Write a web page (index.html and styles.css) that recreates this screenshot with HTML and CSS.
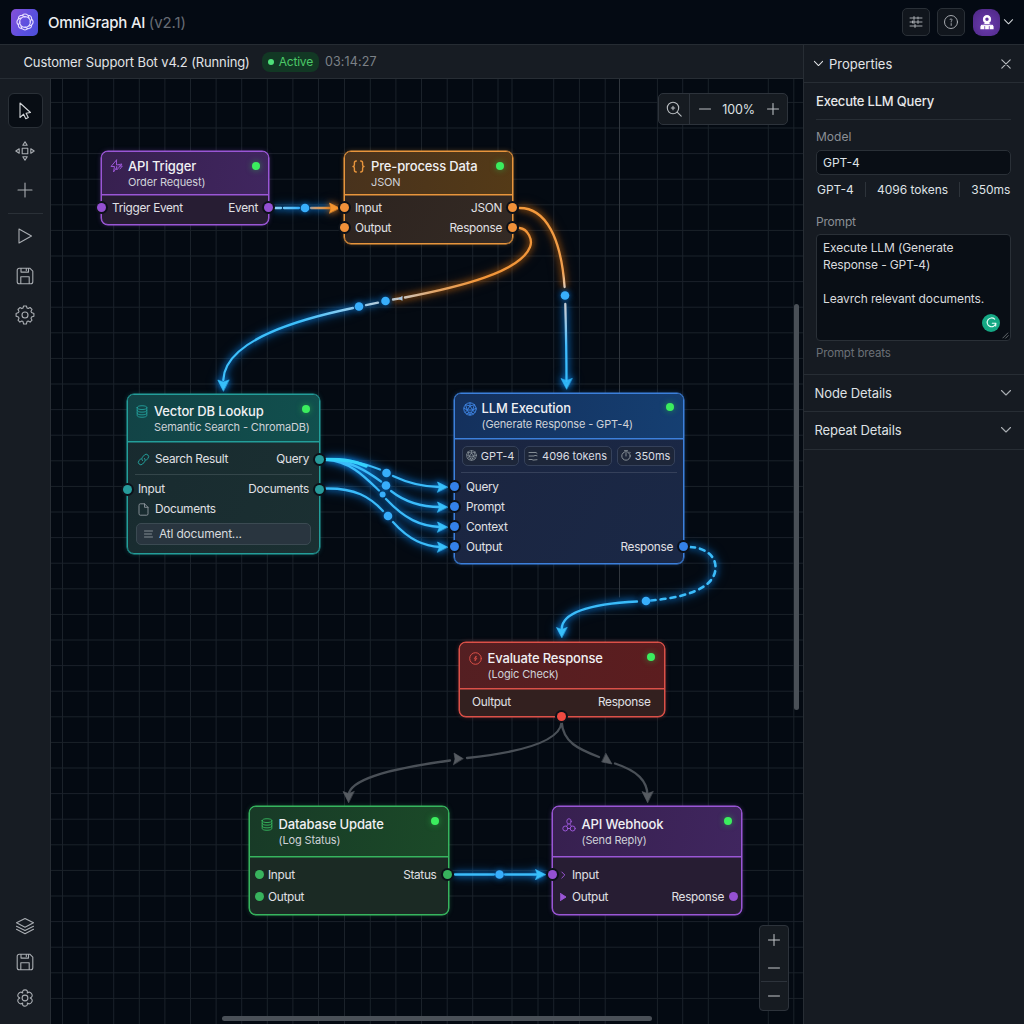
FILE: index.html
```html
<!DOCTYPE html>
<html lang="en">
<head>
<meta charset="utf-8">
<title>OmniGraph AI</title>
<link rel="stylesheet" href="styles.css">
</head>
<body>
<svg class="defs" width="0" height="0" aria-hidden="true">
  <symbol id="save" viewBox="0 0 18 18"><path d="M1.2 3.2a2 2 0 0 1 2-2h10.6l3 3v10.600a2 2 0 0 1-2 2H3.200a2 2 0 0 1-2-2zM5 1.500v3.600h7.500V1.500M4.800 16.600V9.800h8.400v6.800M10.300 2v1.500"/></symbol>
  <symbol id="gear" viewBox="0 0 20 20"><path d="M8.600 1h2.800l.6 2 1.200.5 1.900-1 1.900 1.900-1 1.900.5 1.200 2.400.9v2.800l-2.400.9-.5 1.200 1 1.900-1.900 1.900-1.900-1-1.200.5-.6 2.400H8.600l-.6-2.400-1.200-.5-1.900 1L3 15.200l1-1.900-.5-1.200-2.400-.9V8.500l2.400-.9.500-1.200-1-1.900 1.900-1.900 1.900 1L8 3z"/><circle cx="10" cy="10" r="3"/></symbol>
  <symbol id="database" viewBox="0 0 12 14"><path d="M.8 2.800C.8 1.600 2.600.8 6 .8s5.200.8 5.200 2S9.400 4.900 6 4.900.8 4 .8 2.800zv8.400c0 1.200 1.800 2 5.200 2s5.200-.8 5.200-2V2.800M.8 5.700c0 1.200 1.800 2 5.200 2s5.200-.8 5.200-2M.8 8.600c0 1.200 1.800 2 5.200 2s5.200-.8 5.200-2"/></symbol>
  <symbol id="globe" viewBox="0 0 14 14"><circle cx="7" cy="7" r="6.200"/><path d="M2.500 2.700 7 4l4.500-1.300M.9 6.200 4.300 8 7 4l2.700 4 3.400-1.800M4.300 8 7 13.200 9.700 8H4.300L2 10.700M9.700 8l2.300 2.700M7 .8V4M2.500 2.700 4.300 8M11.500 2.700 9.700 8M3.500 12 7 10l3.500 2"/></symbol>
  <symbol id="down" viewBox="0 0 12 8"><path d="m1.500 1.500 4.500 4.500 4.500-4.500"/></symbol>
</svg>

<header class="topbar">
  <div class="logo"><svg width="18" height="18" viewBox="0 0 18 18"><circle cx="9" cy="9" r="5.400"/><path class="petals" d="M6 2.300Q9-.3 12 2.300M12 2.300Q15.800 2.600 15.600 6M15.600 6Q18.600 9 15.600 12M15.600 12Q15.800 15.400 12 15.700M12 15.700Q9 18.300 6 15.700M6 15.700Q2.200 15.400 2.400 12M2.400 12Q-.6 9 2.400 6M2.400 6Q2.200 2.600 6 2.300M6 2.300 9 4M12 2.300 13 5M15.600 6 14 9M15.600 12 13 13M12 15.700 9 14M6 15.700 5 13M2.400 12 4 9M2.400 6 5 5"/></svg></div>
  <h1 class="brand">OmniGraph AI <span>(v2.1)</span></h1>
  <div class="actions">
    <button class="square"><svg width="14" height="14" viewBox="0 0 14 14"><path d="M1 3h12M1 7h12M1 11h12M5 1.500v3M9 5.500v3M5 5.500v3M6 9.500v3M9 2v2M3.500 6v2"/></svg></button>
    <button class="square"><svg width="16" height="16" viewBox="0 0 16 16"><circle cx="8" cy="8" r="6.500"/><path d="M7 5.600C7.300 4.500 9.100 4.600 8.900 5.900 8.800 6.700 8.200 7 8.200 8M8.200 9.600v1.800"/></svg></button>
    <button class="avatar"><svg width="14" height="15" viewBox="0 0 14 15"><circle class="head" cx="7" cy="4.200" r="2.900"/><path class="body" d="M.4 14.200V11.500Q.6 9.400 3 9.200l2.500-1.500h3L11 9.200q2.400.2 2.600 2.300v2.700z"/><path class="slit" d="M4.700 11.500v3M9.300 11.500v3M2.500 9.600h9"/></svg></button>
    <svg class="chev" width="11" height="8"><use href="#down"/></svg>
  </div>
</header>

<div class="shell">
  <div class="statusbar">
    <span class="flow-name">Customer Support Bot v4.2 (Running)</span>
    <span class="pill"><i></i>Active</span>
    <span class="clock">03:14:27</span>
  </div>

  <nav class="tools">
    <button class="tool selected"><svg width="16" height="20" viewBox="0 0 16 20"><path d="M3 2v14.500l3.600-3.300 2.200 4.600 2.500-1.200-2.200-4.400 4.400-.7z"/></svg></button>
    <button class="tool move"><svg width="20" height="20" viewBox="0 0 20 20"><path d="M7.200 7.200h5.600v5.600H7.200zM10 .8l2.200 3.400H7.800zM10 19.200l2.200-3.400H7.800zM.8 10l3.400-2.200v4.400zM19.200 10l-3.400-2.200v4.400z"/></svg></button>
    <button class="tool add"><svg width="16" height="16" viewBox="0 0 16 16"><path d="M8 1v14M1 8h14"/></svg></button>
    <hr>
    <button class="tool play"><svg width="16" height="18" viewBox="0 0 16 18"><path d="M2 2v14l12.500-7z"/></svg></button>
    <button class="tool"><svg width="18" height="18"><use href="#save"/></svg></button>
    <button class="tool"><svg width="20" height="20"><use href="#gear"/></svg></button>
    <div class="tools-foot">
      <button class="tool"><svg width="20" height="18" viewBox="0 0 20 18"><path d="m10 1.500 8.500 4.300L10 10.200 1.500 5.800zM1.500 9.200l8.500 4.400 8.500-4.400M1.500 12.300l8.500 4.400 8.500-4.400"/></svg></button>
      <button class="tool"><svg width="18" height="18"><use href="#save"/></svg></button>
      <button class="tool"><svg width="18" height="18" viewBox="0 0 18 18"><circle cx="9" cy="9" r="2.900"/><path d="M6.700 4Q6 1 9 .9t2.300 3.100Q13.800 2 15.600 4.700t-1.400 4.300q3.200 1.600 1.400 4.300t-4.300.7Q12 17 9 17.100t-2.300-3.100q-2.500 2-4.300-.7t1.400-4.300Q.6 7.400 2.400 4.700T6.700 4z"/></svg></button>
    </div>
  </nav>

  <main class="canvas">
    <div class="stage">
      <svg class="wires" width="803" height="1024" viewBox="0 0 803 1024">
        <defs>
          <linearGradient id="toOrange" gradientUnits="userSpaceOnUse" x1="273" y1="0" x2="332" y2="0"><stop offset="0" stop-color="#8fd2f5"/><stop offset=".45" stop-color="#39b6ff"/><stop offset=".65" stop-color="#c4a184"/><stop offset="1" stop-color="#f5952f"/></linearGradient>
          <linearGradient id="fall" gradientUnits="userSpaceOnUse" x1="0" y1="208" x2="0" y2="385"><stop offset="0" stop-color="#f59a3c"/><stop offset=".36" stop-color="#f0a050"/><stop offset=".46" stop-color="#e2d3c5"/><stop offset=".6" stop-color="#b8cbdc"/><stop offset=".78" stop-color="#3fbcff"/><stop offset="1" stop-color="#35bdfb"/></linearGradient>
          <linearGradient id="sweep" gradientUnits="userSpaceOnUse" x1="300" y1="0" x2="480" y2="0"><stop offset="0" stop-color="#3dbffb"/><stop offset=".32" stop-color="#9fd0ee"/><stop offset=".56" stop-color="#ccc9c5"/><stop offset=".75" stop-color="#e0a468"/><stop offset="1" stop-color="#f2963a"/></linearGradient>
        </defs>
        <g class="grid">
          <path d="M62.500 79V1024M88.100 79V1024M113.700 79V1024M139.300 79V1024M164.900 79V1024M190.500 79V1024M216.100 79V1024M241.700 79V1024M267.300 79V1024M292.900 79V1024M318.500 79V1024M344.500 79V1024M370.300 79V1024M395.900 79V1024M421.500 79V1024M447.200 79V1024M472.700 79V1024M498 79V332M512 79V1024M538 564V1024M553.700 79V1024M579.400 79V1024M605.200 79V1024M657.400 79V1024M682.700 79V1024M708.300 79V1024M768.300 79V1024M793.800 79V1024"/>
          <path d="M51 102.400H803M51 128H803M51 153.600H803M51 179.200H803M51 204.800H803M51 230.400H803M51 256H803M51 281.600H803M51 307.200H803M51 332.800H803M51 358.400H803M51 384H803M51 409.600H803M51 435.200H803M51 460.800H803M51 486.400H803M51 512H803M51 537.600H803M51 563.200H803M51 588.800H803M51 614.400H803M51 640H803M51 665.600H803M51 691.200H803M51 716.800H803M51 742.400H803M51 768H803M51 793.600H803M51 819.200H803M51 844.800H803M51 870.400H803M51 896H803M51 921.600H803M51 947.200H803M51 972.800H803M51 998.400H803"/>
          <path class="guide" d="M619.500 79V597"/>
        </g>
        <g class="wire glow-blue">
          <path stroke="url(#toOrange)" d="M275 208H281M284 208H299M311 208.010H331"/>
          <path stroke="url(#sweep)" d="M353 308C290 321 225 343 223.300 380M366 305.200l12-2.600"/>
          <path d="M326 459.500C350 459 365 464 380 469.500M393 476C410 484 425 487 440 487M326 459.500C350 460 368 472 381 481.500M391 491C405 502 420 507 440 507M326 459.500C350 461 365 477 379 490.500M386 499C405 519 420 526 440 527M326 488.500C355 488 370 497 383 511M393 522C410 541 425 546 440 547"/>
          <path class="core" d="M326 459.500C345 459.500 355 461 366 466"/>
          <path class="dashed" d="M690 547C708 548 716 558 715.500 568C715 590 680 598 651 600.500"/>
          <path d="M637 601.500C590 604 562 612 561.700 629"/>
          <path d="M455 874.500H494M505 874.500H538"/>
          <g class="heads">
            <path d="M223.300 391l-5.500-11 5.500 2 5.500-2zM566.500 389l-5.500-10.500 5.500 2 5.500-2zM561.700 637.500l-5.200-10 5.200 2 5.200-2zM447.500 487l-10-5 2 5-2 5zM447.500 507l-10-5 2 5-2 5zM447.500 527l-10-5 2 5-2 5zM447.500 547l-10-5 2 5-2 5zM545.500 874.500l-10-5 2 5-2 5z"/>
          </g>
        </g>
        <g class="wire glow-orange">
          <path stroke="url(#sweep)" d="M519.500 228C528 229 533 240 530 247C520 272 460 287 405 297.500M400 298.300L393 299.500"/>
          <path stroke="url(#fall)" d="M519.500 208C546 208 561 238 564.600 287"/>
          <path class="amber-head" d="M339.500 208l-10-5 1.500 5-1.500 5z"/>
          <path class="tick" d="M398 298.700l4.500-3v5z"/>
        </g>
        <g class="wire glow-blue"><path stroke="url(#fall)" d="M565.300 304C566 330 566.500 350 566.500 381"/></g>
        <g class="wire gray">
          <path d="M561.700 722C560 741 524 752 467 758M450 760.500C380 770 350 781 348.500 795M561.700 722C563 742 578 749 599 757M615 763.500C638 771 647 781 647.500 795"/>
          <path class="gray-head" d="M348.500 802.500l-5.500-11 5.500 2 5.500-2zM647.500 802.500l-5.500-11 5.500 2 5.500-2zM463 758.500l-9-5.500 1 6-1.500 5.500zM606 753.500l6 10.500-10-2z"/>
        </g>
        <g class="pulses">
          <circle cx="305" cy="208" r="4.300"/><circle cx="359" cy="306.500" r="4.300"/><circle cx="385.500" cy="301" r="4.300"/><circle cx="565" cy="295.500" r="4.300"/>
          <circle cx="386.500" cy="473" r="4.300"/><circle cx="386" cy="485.500" r="4.300"/><circle cx="382.600" cy="494.500" r="3"/><circle cx="388" cy="516" r="4.300"/>
          <circle cx="646" cy="601" r="4.300"/><circle cx="499.500" cy="874.500" r="4.300"/>
        </g>
      </svg>

      <section class="node violet trigger">
        <header><svg class="icon" width="13" height="14" viewBox="0 0 13 14"><path d="M6.500 1 1 7.500h3.500L3.500 13l3.200-4.500M6.500 1v5L12 5 6.700 11V7.500M9 7h3.300L10 10"/></svg><div><h2>API Trigger</h2><p>Order Request)</p></div><i class="ok"></i></header>
        <div class="row"><i class="port in"></i><span>Trigger Event</span><span>Event</span><i class="port out"></i></div>
      </section>

      <section class="node amber preprocess">
        <header><svg class="icon" width="13" height="13" viewBox="0 0 13 13"><path class="bold" d="M4.300 1Q2.400 1 2.400 3v1.800Q2.400 6.500 1 6.500q1.400 0 1.400 1.700V10q0 2 1.900 2M8.700 1q1.900 0 1.900 2v1.800q0 1.700 1.400 1.700-1.400 0-1.400 1.700V10q0 2-1.900 2"/></svg><div><h2>Pre-process Data</h2><p>JSON</p></div><i class="ok"></i></header>
        <div class="row"><i class="port in"></i><span>Input</span><span>JSON</span><i class="port out"></i></div>
        <div class="row"><i class="port in"></i><span>Output</span><span>Response</span><i class="port out"></i></div>
      </section>

      <section class="node teal vector">
        <header><svg class="icon" width="12" height="13"><use href="#database"/></svg><div><h2>Vector DB Lookup</h2><p>Semantic Search - ChromaDB)</p></div><i class="ok"></i></header>
        <div class="row"><svg class="icon" width="13" height="13" viewBox="0 0 13 13"><path d="M5.400 7.600a2.500 2.500 0 0 1 0-3.400l2-2.200a2.400 2.400 0 0 1 3.500 3.400l-1.700 1.900M7.600 5.400a2.500 2.500 0 0 1 0 3.400l-2 2.200a2.400 2.400 0 0 1-3.500-3.400l1.700-1.900"/></svg><span>Search Result</span><span>Query</span><i class="port out"></i></div>
        <hr>
        <div class="row"><i class="port in"></i><span>Input</span><span>Documents</span><i class="port out"></i></div>
        <div class="row doc"><svg class="icon pale" width="11" height="13" viewBox="0 0 11 13"><path d="M1 2.200Q1 .8 2.300.8H6.500L10 4.300v6.500q0 1.400-1.300 1.400H2.300Q1 12.200 1 10.800zM6.500.8v3.500H10"/></svg><span>Documents</span></div>
        <div class="field"><svg class="icon pale" width="9" height="8" viewBox="0 0 9 8"><path d="M.5 1h8M.5 4h7M.5 7h8"/></svg><span>Atl document...</span></div>
      </section>

      <section class="node blue llm">
        <header><svg class="icon" width="14" height="14"><use href="#globe"/></svg><div><h2>LLM Execution</h2><p>(Generate Response - GPT-4)</p></div><i class="ok"></i></header>
        <div class="chips">
          <span class="c1"><svg class="icon pale" width="11" height="11"><use href="#globe"/></svg>GPT-4</span>
          <span class="c2"><svg class="icon pale" width="10" height="10" viewBox="0 0 10 10"><path d="M1 1.500h7l1 .8M1 5h5l1-.6 2 .4M1 8.500h3l1 .6 4-.4"/></svg>4096 tokens</span>
          <span class="c3"><svg class="icon pale" width="10" height="11" viewBox="0 0 10 11"><circle cx="5" cy="6" r="4.200"/><path d="M5 6V3.500M3.500.7h3M8.500 2l.8.8"/></svg>350ms</span>
        </div>
        <hr>
        <div class="row"><i class="port in"></i><span>Query</span></div>
        <div class="row"><i class="port in"></i><span>Prompt</span></div>
        <div class="row"><i class="port in"></i><span>Context</span></div>
        <div class="row"><i class="port in"></i><span>Output</span><span>Response</span><i class="port out"></i></div>
      </section>

      <section class="node red evaluate">
        <header><svg class="icon" width="13" height="13" viewBox="0 0 13 13"><circle cx="6.500" cy="6.500" r="5.800"/><path class="thin" d="M7 4.300 5.200 6.800h1.300L6 8.900l1.900-2.700H6.700z"/></svg><div><h2>Evaluate Response</h2><p>(Logic Check)</p></div><i class="ok"></i></header>
        <div class="row"><span>Oultput</span><span>Response</span></div>
        <i class="port bottom"></i>
      </section>

      <section class="node green dbupdate">
        <header><svg class="icon" width="12" height="13"><use href="#database"/></svg><div><h2>Database Update</h2><p>(Log Status)</p></div><i class="ok"></i></header>
        <div class="row"><i class="port inner"></i><span>Input</span><span>Status</span><i class="port out"></i></div>
        <div class="row"><i class="port inner"></i><span>Output</span></div>
      </section>

      <section class="node violet webhook">
        <header><svg class="icon" width="14" height="14" viewBox="0 0 14 14"><ellipse cx="7" cy="3.400" rx="2.200" ry="2.700"/><circle cx="3.300" cy="10.500" r="2.500"/><circle cx="10.700" cy="10.500" r="2.500"/><path d="M6.300 6 4.500 8.300M7.700 6l1.800 2.300M5.800 10.500h2.400"/></svg><div><h2>API Webhook</h2><p>(Send Reply)</p></div><i class="ok"></i></header>
        <div class="row"><i class="port in"></i><svg class="icon mark" width="7" height="8" viewBox="0 0 7 8"><path d="m1.800 1 3 3-3 3"/></svg><span>Input</span></div>
        <div class="row"><svg class="icon mark" width="7" height="8" viewBox="0 0 7 8"><path class="solid" d="M.5.500 6 4 .5 7.500z"/></svg><span>Output</span><span>Response</span><i class="port inner-right"></i></div>
      </section>
    </div>

    <div class="zoombar">
      <button class="lens"><svg width="16" height="16" viewBox="0 0 16 16"><circle cx="7" cy="7" r="5.700"/><path d="m11.200 11.200 4 4M7 5.300v3.400M5.300 7h3.400"/></svg></button>
      <button><svg width="12" height="12" viewBox="0 0 12 12"><path d="M.5 6h11"/></svg></button>
      <span>100%</span>
      <button><svg width="12" height="12" viewBox="0 0 12 12"><path d="M.5 6h11M6 .5v11"/></svg></button>
    </div>
    <div class="stepper">
      <button><svg width="12" height="12" viewBox="0 0 12 12"><path d="M.5 6h11M6 .5v11"/></svg></button>
      <button class="mid"><svg width="12" height="12" viewBox="0 0 12 12"><path d="M.5 6h11"/></svg></button>
      <button class="last"><svg width="12" height="12" viewBox="0 0 12 12"><path d="M.5 6h11"/></svg></button>
    </div>
    <div class="scroll vertical"></div>
    <div class="scroll horizontal"></div>
  </main>

  <aside class="panel">
    <div class="panel-head"><svg width="11" height="7.400"><use href="#down"/></svg><span>Properties</span><svg class="close" width="10" height="10" viewBox="0 0 10 10"><path d="m.8.800 8.400 8.400M9.200.800.800 9.200"/></svg></div>
    <div class="form">
      <h3>Execute LLM Query</h3>
      <label class="model">Model</label>
      <div class="input">GPT-4</div>
      <div class="stats"><span>GPT-4</span><i></i><span>4096 tokens</span><i></i><span>350ms</span></div>
      <label class="prompt">Prompt</label>
      <div class="textarea">Execute LLM (Generate<br>Response - GPT-4)<br><br>Leavrch relevant documents.
        <span class="helper"><svg width="11" height="11" viewBox="0 0 11 11"><path d="M8.700 2.200A4.400 4.400 0 1 0 9.900 6.200H6.300M9.900 6.200 9.700 9"/></svg></span>
        <svg class="grip" width="7" height="7" viewBox="0 0 7 7"><path d="m.8 6 5-5M3.600 6.200l2.600-2.600"/></svg>
      </div>
      <p class="hint">Prompt breats</p>
    </div>
    <div class="fold"><span>Node Details</span><svg width="12" height="8"><use href="#down"/></svg></div>
    <div class="fold second"><span>Repeat Details</span><svg width="12" height="8"><use href="#down"/></svg></div>
  </aside>
</div>
</body>
</html>
```

FILE: styles.css
```css
* { box-sizing: border-box; }
body {
  margin: 0;
  width: 1024px;
  height: 1024px;
  overflow: hidden;
  display: flex;
  flex-direction: column;
  background: #040a12;
  color: #dfe2e6;
  font-family: Inter, "Liberation Sans", sans-serif;
  font-size: 12px;
}
h1, h2, h3, p { margin: 0; font-weight: 400; }
button { padding: 0; border: 0; background: none; color: inherit; font: inherit; display: flex; align-items: center; justify-content: center; }
svg { display: block; fill: none; stroke: currentColor; stroke-width: 1.1; stroke-linecap: round; stroke-linejoin: round; flex: none; }
hr { border: 0; margin: 0; }
.defs { position: absolute; }

.topbar { height: 45px; flex: none; display: flex; align-items: center; padding: 0 11px; border-bottom: 1px solid #262c33; background: #040a13; }
.logo { width: 27px; height: 27px; border-radius: 5px; display: grid; place-items: center; color: #e6dcff; background: linear-gradient(120deg, #8650d8, #5a50e0 60%, #4c4ed6); }
.logo svg { stroke-width: 1.100; }
.brand { margin-left: 10px; padding-top: 1px; font-size: 15px; font-weight: 500; color: #eceef1; letter-spacing: -.25px; white-space: nowrap; }
.brand span { color: #676c74; font-weight: 400; letter-spacing: -.1px; }
.actions { margin-left: auto; display: flex; align-items: center; }
.square { width: 28px; height: 28px; margin-right: 7px; border: 1px solid #2a3037; border-radius: 5px; background: #11161d; color: #b4b8bd; }
.square svg { stroke-width: .9; }
.avatar { width: 27px; height: 27px; margin-left: 1px; border-radius: 9px; background: radial-gradient(circle at 50% 60%, #6b3cae, #4c2683); color: #fff; }
.avatar .head { stroke-width: 2.400; }
.avatar .body { fill: #fff; stroke: none; }
.avatar .slit { stroke: #6b3cae; stroke-width: .8; }
.chev { margin-left: 3px; margin-right: -1px; color: #d5d8db; }

.shell { flex: 1; min-height: 0; display: grid; grid-template-columns: 51px 752px 1fr; grid-template-rows: 34px 1fr; }
.statusbar { grid-column: 1 / 3; display: flex; align-items: center; padding-left: 23.500px; background: #171c23; border-bottom: 1px solid #272d34; white-space: nowrap; }
.flow-name { font-size: 13px; color: #e1e3e6; letter-spacing: -.13px; }
.pill { margin-left: 12px; height: 20px; padding: 0 6px; display: flex; align-items: center; gap: 5px; border-radius: 8px; background: #123824; color: #4cc968; font-size: 12px; letter-spacing: -.2px; }
.pill i { width: 6px; height: 6px; border-radius: 50%; background: #4fe07a; }
.clock { margin-left: 6px; font-size: 12.500px; color: #7c8187; letter-spacing: .12px; }

.tools { display: flex; flex-direction: column; align-items: center; gap: 5.500px; padding-top: 14px; background: #171c23; border-right: 1px solid #272d34; color: #a9adb2; }
.tool { width: 35px; height: 34px; flex: none; }
.selected { height: 35px; border: 1px solid #2a3037; border-radius: 6px; background: #080d14; color: #d2d5d8; }
.tools hr { width: 35px; height: 1px; background: #2a3037; }
.tools-foot { margin-top: auto; display: flex; flex-direction: column; gap: 2px; padding-bottom: 9px; }

.canvas { position: relative; overflow: hidden; background: #040a12; }
.stage { position: absolute; left: -51px; top: -79px; width: 803px; height: 1024px; }
.wires { position: absolute; left: 0; top: 0; }
.grid path { stroke: #1b222a; stroke-width: 1; }
.grid .guide { stroke: #31373e; }
.wire path { stroke-width: 2.300; }
.glow-blue { stroke: #3bbcfa; filter: drop-shadow(0 0 3px #0a84e8) drop-shadow(0 0 5px #0a6cc8aa); }
.glow-orange { filter: drop-shadow(0 0 3px #c66a13) drop-shadow(0 0 5px #a34f0888); }
.wire .core { stroke: #35d2fb; stroke-width: 3.500; }
.wire .dashed { stroke-dasharray: 5 5; stroke-width: 2.600; }
.wire .heads path { fill: #38c0fb; stroke: #38c0fb; stroke-width: .6; }
.wire .amber-head { fill: #f5952f; stroke: #f5952f; stroke-width: .6; }
.wire .tick { fill: #a9c8e4; stroke: none; }
.gray { stroke: #4a5057; }
.wire .gray-head { fill: #565b61; stroke: #565b61; stroke-width: .6; }
.pulses circle { fill: #38aefb; stroke: none; }
.pulses { filter: drop-shadow(0 0 3px #0a7ce0); }

.node { --line: #9a56d6; position: absolute; border: 1px solid var(--line); border-radius: 7px; background: var(--bodybg); display: flex; flex-direction: column; box-shadow: 0 0 0 .5px var(--line), 0 0 5px color-mix(in srgb, var(--line) 35%, transparent); }
.node > header { flex: none; display: flex; align-items: flex-start; position: relative; border-bottom: 1px solid var(--line); border-radius: 6px 6px 0 0; background: var(--head); box-shadow: 0 .5px 0 var(--line); white-space: nowrap; }
.node h2 { font-size: 13px; font-weight: 500; line-height: 16px; letter-spacing: -.14px; color: #f0f0f3; }
.node p { font-size: 11px; line-height: 16px; letter-spacing: -.13px; color: #cfd2d8; }
.icon { color: var(--line); stroke-width: 1; }
.icon.pale { color: #8e979e; stroke-width: .9; }
.bold { stroke-width: 1.400; }
.thin { stroke-width: .8; }
.solid { fill: var(--line); }
.ok { position: absolute; width: 8px; height: 8px; border-radius: 50%; background: #3bed5e; box-shadow: 0 0 6px #2cc34b99; }
.row { position: relative; flex: none; height: 20px; display: flex; align-items: center; padding: 0 10px; font-size: 11.800px; letter-spacing: -.3px; white-space: nowrap; color: #e0e0e5; }
.row span + span { margin-left: auto; }
.port { position: absolute; width: 9px; height: 9px; border-radius: 50%; background: var(--port); box-shadow: 0 0 0 2px #0c1119; }
.in { left: -5px; top: 5.500px; }
.out { right: -4.500px; top: 5.500px; }
.inner, .inner-right { box-shadow: none; top: 5.500px; }
.inner { left: 4.500px; }
.inner-right { right: 3px; }
.bottom { left: 97px; bottom: -5px; }

.violet { --line: #9a56d6; --port: #9450d2; --head: linear-gradient(100deg, #37204f, #40265f); --bodybg: #271d33; }
.amber { --line: #e8953c; --port: #f0913a; --head: linear-gradient(100deg, #48321d, #543a17); --bodybg: linear-gradient(120deg, #2c231f, #342a24); }
.teal { --line: #239e9a; --port: #279b9b; --head: linear-gradient(100deg, #124346, #11504e); --bodybg: linear-gradient(120deg, #182a2f, #1b3032); }
.blue { --line: #3c80dc; --port: #3481e8; --head: linear-gradient(100deg, #14305c, #153f72); --bodybg: linear-gradient(120deg, #1b2540, #1a2846); }
.red { --line: #dc5048; --port: #ee4a41; --head: linear-gradient(100deg, #541f22, #5c1d1f); --bodybg: #33201f; }
.green { --line: #36b55e; --port: #38b35d; --head: linear-gradient(100deg, #183a27, #1b4a28); --bodybg: #1b2a24; }

.trigger { left: 101px; top: 151px; width: 168px; height: 73.500px; }
.trigger > header { height: 43px; padding: 6px 8px; gap: 5px; }
.trigger > header .icon { margin-top: 1px; }
.trigger .ok { right: 8.500px; top: 9.500px; }
.trigger .row { margin-top: 3px; }
.trigger .port, .preprocess .port { top: 5px; }
.preprocess { left: 344px; top: 151px; width: 169px; height: 93px; }
.preprocess > header { height: 43px; padding: 6px 7px; gap: 6px; }
.preprocess > header .icon { margin-top: 2px; }
.preprocess .ok { right: 8.500px; top: 9.500px; }
.preprocess header + .row { margin-top: 3px; }
.vector { left: 127px; top: 394px; width: 193px; height: 160px; }
.vector > header { height: 47px; padding: 7.500px 8px; gap: 6px; }
.vector > header .icon { margin-top: 2px; }
.vector .ok { right: 9px; top: 9.500px; }
.vector header + .row { margin-top: 7px; padding-left: 9px; gap: 5px; }
.vector hr { height: 1px; margin: 5px 7px 4px; background: #34464a; }
.vector .doc { gap: 6px; padding-left: 10px; }
.field { margin: 4px 8px 0 8px; height: 22px; border: 1px solid #3b4a52; border-radius: 5px; background: #29353f; display: flex; align-items: center; gap: 6px; padding-left: 7px; letter-spacing: -.2px; color: #d6dadd; }
.field span { margin-top: -1px; }
.llm { left: 454px; top: 393px; width: 230px; height: 171px; }
.llm > header { height: 45px; padding: 6px 7.500px; gap: 5px; }
.llm > header .icon { margin-top: 1.500px; }
.llm .ok { right: 9px; top: 9px; }
.chips { display: flex; gap: 5px; margin: 6.500px 7px 0 6.500px; }
.chips span { height: 20.500px; display: flex; align-items: center; justify-content: center; gap: 4px; border: 1px solid #35415a; border-radius: 5px; background: #1d2639; font-size: 11px; letter-spacing: -.05px; white-space: nowrap; color: #d9dce2; }
.c1 { width: 57px; } .c2 { width: 88px; } .c3 { width: 58px; }
.llm hr { height: 1px; margin: 6px 6px 4px; background: #35405a; }
.llm .row { padding-left: 11px; }
.llm .port { top: 5px; }
.evaluate { left: 459px; top: 642px; width: 206px; height: 75px; }
.evaluate > header { height: 46px; padding: 6.500px 8.500px; gap: 6px; }
.evaluate > header .icon { margin-top: 2px; }
.evaluate .ok { right: 9px; top: 9.500px; }
.evaluate .row { margin-top: 2.500px; padding: 0 13.500px 0 12px; }
.dbupdate { left: 249px; top: 806px; width: 199.500px; height: 109px; }
.dbupdate > header { height: 50px; padding: 8.500px 10.500px; gap: 6px; }
.dbupdate > header .icon { margin-top: 2px; }
.dbupdate .ok { right: 9px; top: 9.500px; }
.dbupdate .row { padding-left: 18px; padding-right: 11px; }
.dbupdate header + .row { margin-top: 7.500px; margin-bottom: 2px; }
.webhook { left: 552px; top: 806px; width: 190px; height: 109px; }
.webhook > header { height: 50px; padding: 8.500px 9px; gap: 5.500px; }
.webhook > header .icon { margin-top: 2px; }
.webhook .ok { right: 9px; top: 9.500px; }
.webhook .row { padding: 0 17px 0 6.500px; gap: 5.500px; }
.webhook header + .row { margin-top: 7.500px; margin-bottom: 2px; }

.zoombar { position: absolute; left: 607px; top: 14px; width: 130px; height: 32px; display: flex; align-items: center; border: 1px solid #2d333b; border-radius: 5px; background: #161b21; color: #b9bdc1; }
.zoombar button { width: 29px; height: 30px; }
.zoombar .lens { width: 31px; border-right: 1px solid #2d333b; }
.zoombar span { flex: 1; text-align: center; font-size: 12.500px; letter-spacing: -.15px; color: #dfe2e5; }
.stepper { position: absolute; left: 708px; top: 846px; width: 30px; height: 86px; display: flex; flex-direction: column; align-items: center; border: 1px solid #2d333b; border-radius: 4px; background: #161b21; color: #c3c7ca; }
.stepper button { width: 26px; height: 28px; }
.stepper .mid { border-bottom: 1px solid #2d333b; }
.stepper svg { stroke-width: 1; }
.scroll { position: absolute; border-radius: 3px; background: #4a5057; }
.vertical { left: 743px; top: 225px; width: 5px; height: 406px; }
.horizontal { left: 171px; top: 937px; width: 430px; height: 5px; }

.panel { grid-column: 3; grid-row: 1 / 3; border-left: 1px solid #272d34; background: #161b22; white-space: nowrap; }
.panel-head { height: 38px; display: flex; align-items: center; padding: 0 13px 0 9px; gap: 5px; border-bottom: 1px solid #272d34; font-size: 13px; color: #e2e4e7; }
.panel-head .close { margin-left: auto; color: #b9bdc1; }
.form { height: 292px; padding: 0 13px 0 12px; border-bottom: 1px solid #272d34; }
.form h3 { height: 37px; line-height: 37px; border-bottom: 1px solid #272d34; font-size: 13px; font-weight: 500; letter-spacing: -.2px; color: #e6e8ea; }
label { display: block; line-height: 16px; color: #8a8f95; }
.model { margin-top: 9px; }
.input { margin-top: 5px; height: 25px; padding-left: 6px; line-height: 23px; border: 1px solid #2a3037; border-radius: 5px; background: #090e15; }
.stats { margin: 6.500px .5px 0 1px; display: flex; justify-content: space-between; line-height: 15px; }
.stats i { width: 1px; background: #2d333a; }
.prompt { margin-top: 17px; letter-spacing: -.2px; }
.textarea { position: relative; margin-top: 4px; height: 107.500px; padding: 4.500px 6px; line-height: 17px; letter-spacing: -.12px; border: 1px solid #2a3037; border-radius: 4px; background: #090e15; color: #d9dbde; }
.helper { position: absolute; right: 10px; bottom: 8.500px; width: 18px; height: 18px; display: grid; place-items: center; border-radius: 50%; background: #15a884; color: #e8fff8; }
.grip { position: absolute; right: 1px; bottom: 1px; color: #8b9095; stroke-width: .7; }
.hint { margin-top: 4px; font-size: 11.500px; line-height: 16px; letter-spacing: -.15px; color: #6b7076; }
.fold { height: 37px; display: flex; align-items: center; justify-content: space-between; padding: 0 12px 0 10.500px; border-bottom: 1px solid #272d34; font-size: 13px; letter-spacing: -.1px; color: #dfe1e4; }
.second { height: 37.500px; }
.fold svg { color: #a9adb2; }
```
